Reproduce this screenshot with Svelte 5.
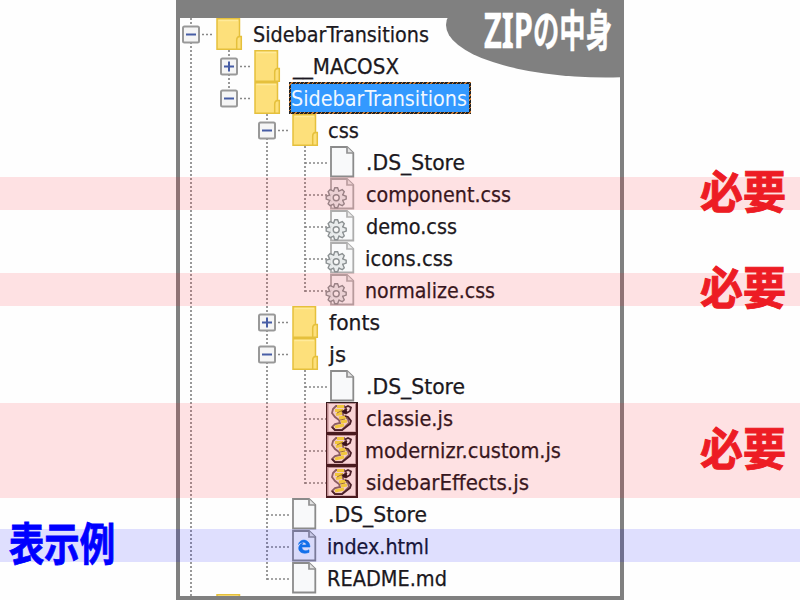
<script>
  // x: left edge of the label, w: its length; lines: x positions of the guides passing through
  const rows = [
    { d: 0, icon: 'folder', box: '-', label: 'SidebarTransitions', x: 253, w: 176, lines: [[191, 0, 32]] },
    { d: 1, icon: 'folder', box: '+', label: '__MACOSX', x: 293, w: 106, lines: [[191, 0, 32], [229, 0, 32]] },
    { d: 1, icon: 'folder', box: '-', label: 'SidebarTransitions', x: 291, w: 176, selected: true, lines: [[191, 0, 32], [229, 0, 16]] },
    { d: 2, icon: 'folder', box: '-', label: 'css', x: 328, w: 31, lines: [[191, 0, 32], [267, 0, 32]] },
    { d: 3, icon: 'file', label: '.DS_Store', x: 366, w: 99, lines: [[191, 0, 32], [267, 0, 32], [305, 0, 32]] },
    { d: 3, icon: 'gear', label: 'component.css', x: 366, w: 145, lines: [[191, 0, 32], [267, 0, 32], [305, 0, 32]] },
    { d: 3, icon: 'gear', label: 'demo.css', x: 366, w: 91, lines: [[191, 0, 32], [267, 0, 32], [305, 0, 32]] },
    { d: 3, icon: 'gear', label: 'icons.css', x: 365, w: 88, lines: [[191, 0, 32], [267, 0, 32], [305, 0, 32]] },
    { d: 3, icon: 'gear', label: 'normalize.css', x: 365, w: 130, lines: [[191, 0, 32], [267, 0, 32], [305, 0, 18]] },
    { d: 2, icon: 'folder', box: '+', label: 'fonts', x: 329, w: 51, lines: [[191, 0, 32], [267, 0, 32]] },
    { d: 2, icon: 'folder', box: '-', label: 'js', x: 329, w: 17, lines: [[191, 0, 32], [267, 0, 32]] },
    { d: 3, icon: 'file', label: '.DS_Store', x: 366, w: 99, lines: [[191, 0, 32], [267, 0, 32], [305, 0, 32]] },
    { d: 3, icon: 'script', label: 'classie.js', x: 366, w: 87, lines: [[191, 0, 32], [267, 0, 32], [305, 0, 32]] },
    { d: 3, icon: 'script', label: 'modernizr.custom.js', x: 365, w: 196, lines: [[191, 0, 32], [267, 0, 32], [305, 0, 32]] },
    { d: 3, icon: 'script', label: 'sidebarEffects.js', x: 366, w: 163, lines: [[191, 0, 32], [267, 0, 32], [305, 0, 18]] },
    { d: 2, icon: 'file', label: '.DS_Store', x: 328, w: 99, lines: [[191, 0, 32], [267, 0, 32]] },
    { d: 2, icon: 'edge', label: 'index.html', x: 327, w: 102, lines: [[191, 0, 32], [267, 0, 32]] },
    { d: 2, icon: 'file', label: 'README.md', x: 327, w: 120, lines: [[191, 0, 32], [267, 0, 18]] },
    { d: 0, icon: 'folder', label: '', x: 253, w: 0, lines: [[191, 0, 2]] }
  ];
  const bands = [
    { y: 177, h: 32.5, kind: 'need' },
    { y: 273, h: 32.5, kind: 'need' },
    { y: 403, h: 94.5, kind: 'need' },
    { y: 528.5, h: 33, kind: 'sample' }
  ];
  const needed = [209, 305, 466];
  const teeth = [0, 45, 90, 135, 180, 225, 270, 315];
</script>

<main>
  <div class="panel">
    <ul>
      {#each rows as r}
        <li>
          <svg class="guide" style:width="{r.x - 180}px" height="32" viewBox="180 0 {r.x - 180} 32">
            {#each r.lines as [x, a, b]}
              <line class="dots" x1={x} y1={a} x2={x} y2={b} />
            {/each}
            {#if r.box}
              <line class="dots" x1={202 + r.d * 38} y1="16.5" x2={213 + r.d * 38} y2="16.5" />
              <g transform="translate({191 + r.d * 38} 16.5)">
                <rect x="-8" y="-8" width="16" height="16" rx="1.5" fill="#f5f5f5" stroke="#999" stroke-width="2" />
                <path d={r.box === '+' ? 'M-5 0H5M0-5V5' : 'M-5 0H5'} stroke="#475da5" stroke-width="2" />
              </g>
            {:else if r.d}
              <line class="dots" x1={191 + r.d * 38} y1="17" x2={213 + r.d * 38} y2="17" />
            {/if}
            <g transform="translate({216 + r.d * 38} 0)">
              {#if r.icon === 'folder'}
                <path d="M1 .8H23.5V18.5H25.3V31.2H1Z" fill="#fde07b" stroke="#e5c03c" stroke-width="1.5" />
                <path d="M20.7 31V22Q20.7 18.7 23.5 18.5" fill="none" stroke="#e5c03c" stroke-width="1.5" />
                <path d="M2.5 2.5H22" stroke="#ffea9a" stroke-width="1.5" />
              {:else if r.icon === 'script'}
                <rect x="-4" y="0" width="32" height="32" fill="#301c1e" />
                <rect x="-3" y="1" width="29" height="29" fill="#b09a9c" />
                <rect x="-1.5" y="2" width="26.5" height="27.5" fill="#f9eeee" />
                <path d="M6 4H14L16 7 12 11 14 14 18 17 19 21 15 25 12 28H5L2 25 5 22 10 21 9 18 5 15 2 11 3 7Z" fill="#f2e5df" stroke="#7d686c" stroke-width="1.8" />
                <path d="M7 4.5H14M5 8.5H13M6 12.5L12 11.5M9 16L16 15M11 20L17 19M5 25L14 23" stroke="#f0e040" stroke-width="3.2" />
                <path d="M7 11L13 8M10 18L15 17" stroke="#94802b" stroke-width="1" />
                <path d="M15 5.5L18 4 21 5.5 20 9 16 11.5 13 9.5 17 7M15 14L18 15 21 19 20 22 16 25 12 28.2H5L2 25" fill="none" stroke="#33232a" stroke-width="1.8" />
                <path d="M13 10.5L17 9" stroke="#20151a" stroke-width="3" />
              {:else}
                <g opacity={r.icon === 'gear' ? 0.7 : 1}>
                  <path d="M1 1H17L23.3 7V30.5H1Z" fill="#f8f9fa" stroke="#8b8b8b" stroke-width="1.8" />
                  <path d="M17 1V7H23.3" fill="#e3e3e3" stroke="#929292" stroke-width="1.7" />
                </g>
                {#if r.icon === 'gear'}
                  <g transform="translate(6.2 19.7)">
                    {#each teeth as t}
                      <path d="M-3 -5.8L-1.4 -10H1.4L3 -5.8" fill="#e8ebec" stroke="#8c9193" stroke-width="1.4" transform="rotate({t})" />
                    {/each}
                    <circle r="6" fill="#e8ebec" />
                    <circle r="3" fill="#fafafa" stroke="#8c9193" stroke-width="1.4" />
                  </g>
                {:else if r.icon === 'edge'}
                  <path d="M6.5 14.5C7.5 8.5 17.5 8 18 17H9.8C10 21 14 21.5 17 19.8V22.4C10 25 5.5 21 7 16.5Q8.5 13 11 13.2Q9.9 14 9.9 15H14.3C14.2 11 9 11.5 6.5 14.5Z" fill="#1680e8" stroke="#1680e8" stroke-width=".6" />
                {/if}
              {/if}
            </g>
          </svg>
          {#if r.label}
            <span class="label" class:selected={r.selected}>
              <svg style:width="{r.w}px" height="32">
                <text x="0" y="24" textLength={r.w} lengthAdjust="spacingAndGlyphs">{r.label}</text>
              </svg>
            </span>
          {/if}
        </li>
      {/each}
    </ul>
  </div>

  <svg class="badge" width="180" height="82" viewBox="440 0 180 82">
    <ellipse cx="606" cy="25" rx="160" ry="52.5" fill="#808080" />
  </svg>
  <svg class="notes" width="800" height="600">
    <text class="title" x="484" y="48" textLength="49" lengthAdjust="spacingAndGlyphs">ZIP</text>
    <text class="title kanji" x="533" y="47" textLength="79" lengthAdjust="spacingAndGlyphs">の中身</text>
  </svg>

  {#each bands as b}
    <div class="band {b.kind}" style:top="{b.y}px" style:height="{b.h}px"></div>
  {/each}

  <svg class="notes" width="800" height="600">
    {#each needed as y}
      <text class="red" x="700" {y} textLength="86" lengthAdjust="spacingAndGlyphs">必要</text>
    {/each}
    <text class="blue" x="9" y="561" textLength="106" lengthAdjust="spacingAndGlyphs">表示例</text>
  </svg>
</main>

<style>
  :global(body) { margin: 0; background: #fff; }
  main { position: relative; width: 800px; height: 600px; overflow: hidden; background: #fefefe; }
  .panel {
    box-sizing: border-box; width: 448px; height: 600px; margin-left: 176px;
    border: 4px solid #808080; border-top-width: 18px; background: #fefefe; overflow: hidden;
  }
  ul { list-style: none; margin: 0; padding: 0; }
  li { display: flex; height: 32px; }
  svg { display: block; flex: none; }
  .guide { overflow: hidden; }
  .dots { stroke: #888; stroke-width: 1.7; stroke-dasharray: 2 2; }
  .label { display: block; height: 32px; }
  .label svg { overflow: visible; }
  .label text { font: 22px "DejaVu Sans Condensed", "DejaVu Sans", sans-serif; fill: #1b1820; stroke: #1b1820; stroke-width: .25; }
  .selected {
    box-sizing: border-box; margin-left: -2px; width: 182px;
    background: #3399ff; border: 2px solid #222;
    border-image: repeating-linear-gradient(135deg, #222 0 2px, #c87932 2px 3px) 2;
  }
  .selected svg { margin-top: -2px; }
  .label.selected text { fill: #f0f7ff; stroke: none; }
  .badge { position: absolute; left: 440px; top: 0; overflow: hidden; }
  .band { position: absolute; left: 0; width: 800px; }
  .need { background: rgba(255, 20, 30, .12); }
  .sample { background: rgba(0, 0, 255, .12); }
  .notes { position: absolute; left: 0; top: 0; overflow: visible; }
  .notes text { font: bold 45px "Noto Sans CJK JP", sans-serif; }
  .notes .title { font: bold 49px "Noto Sans", "Open Sans", sans-serif; fill: #fff; stroke: #fff; stroke-width: .4; }
  .notes .kanji { font: bold 44px "Noto Sans CJK JP", sans-serif; }
  .red { fill: #ed1c24; stroke: #ed1c24; stroke-width: 1; }
  .blue { fill: #0000ff; stroke: #0000ff; stroke-width: .8; }
</style>
